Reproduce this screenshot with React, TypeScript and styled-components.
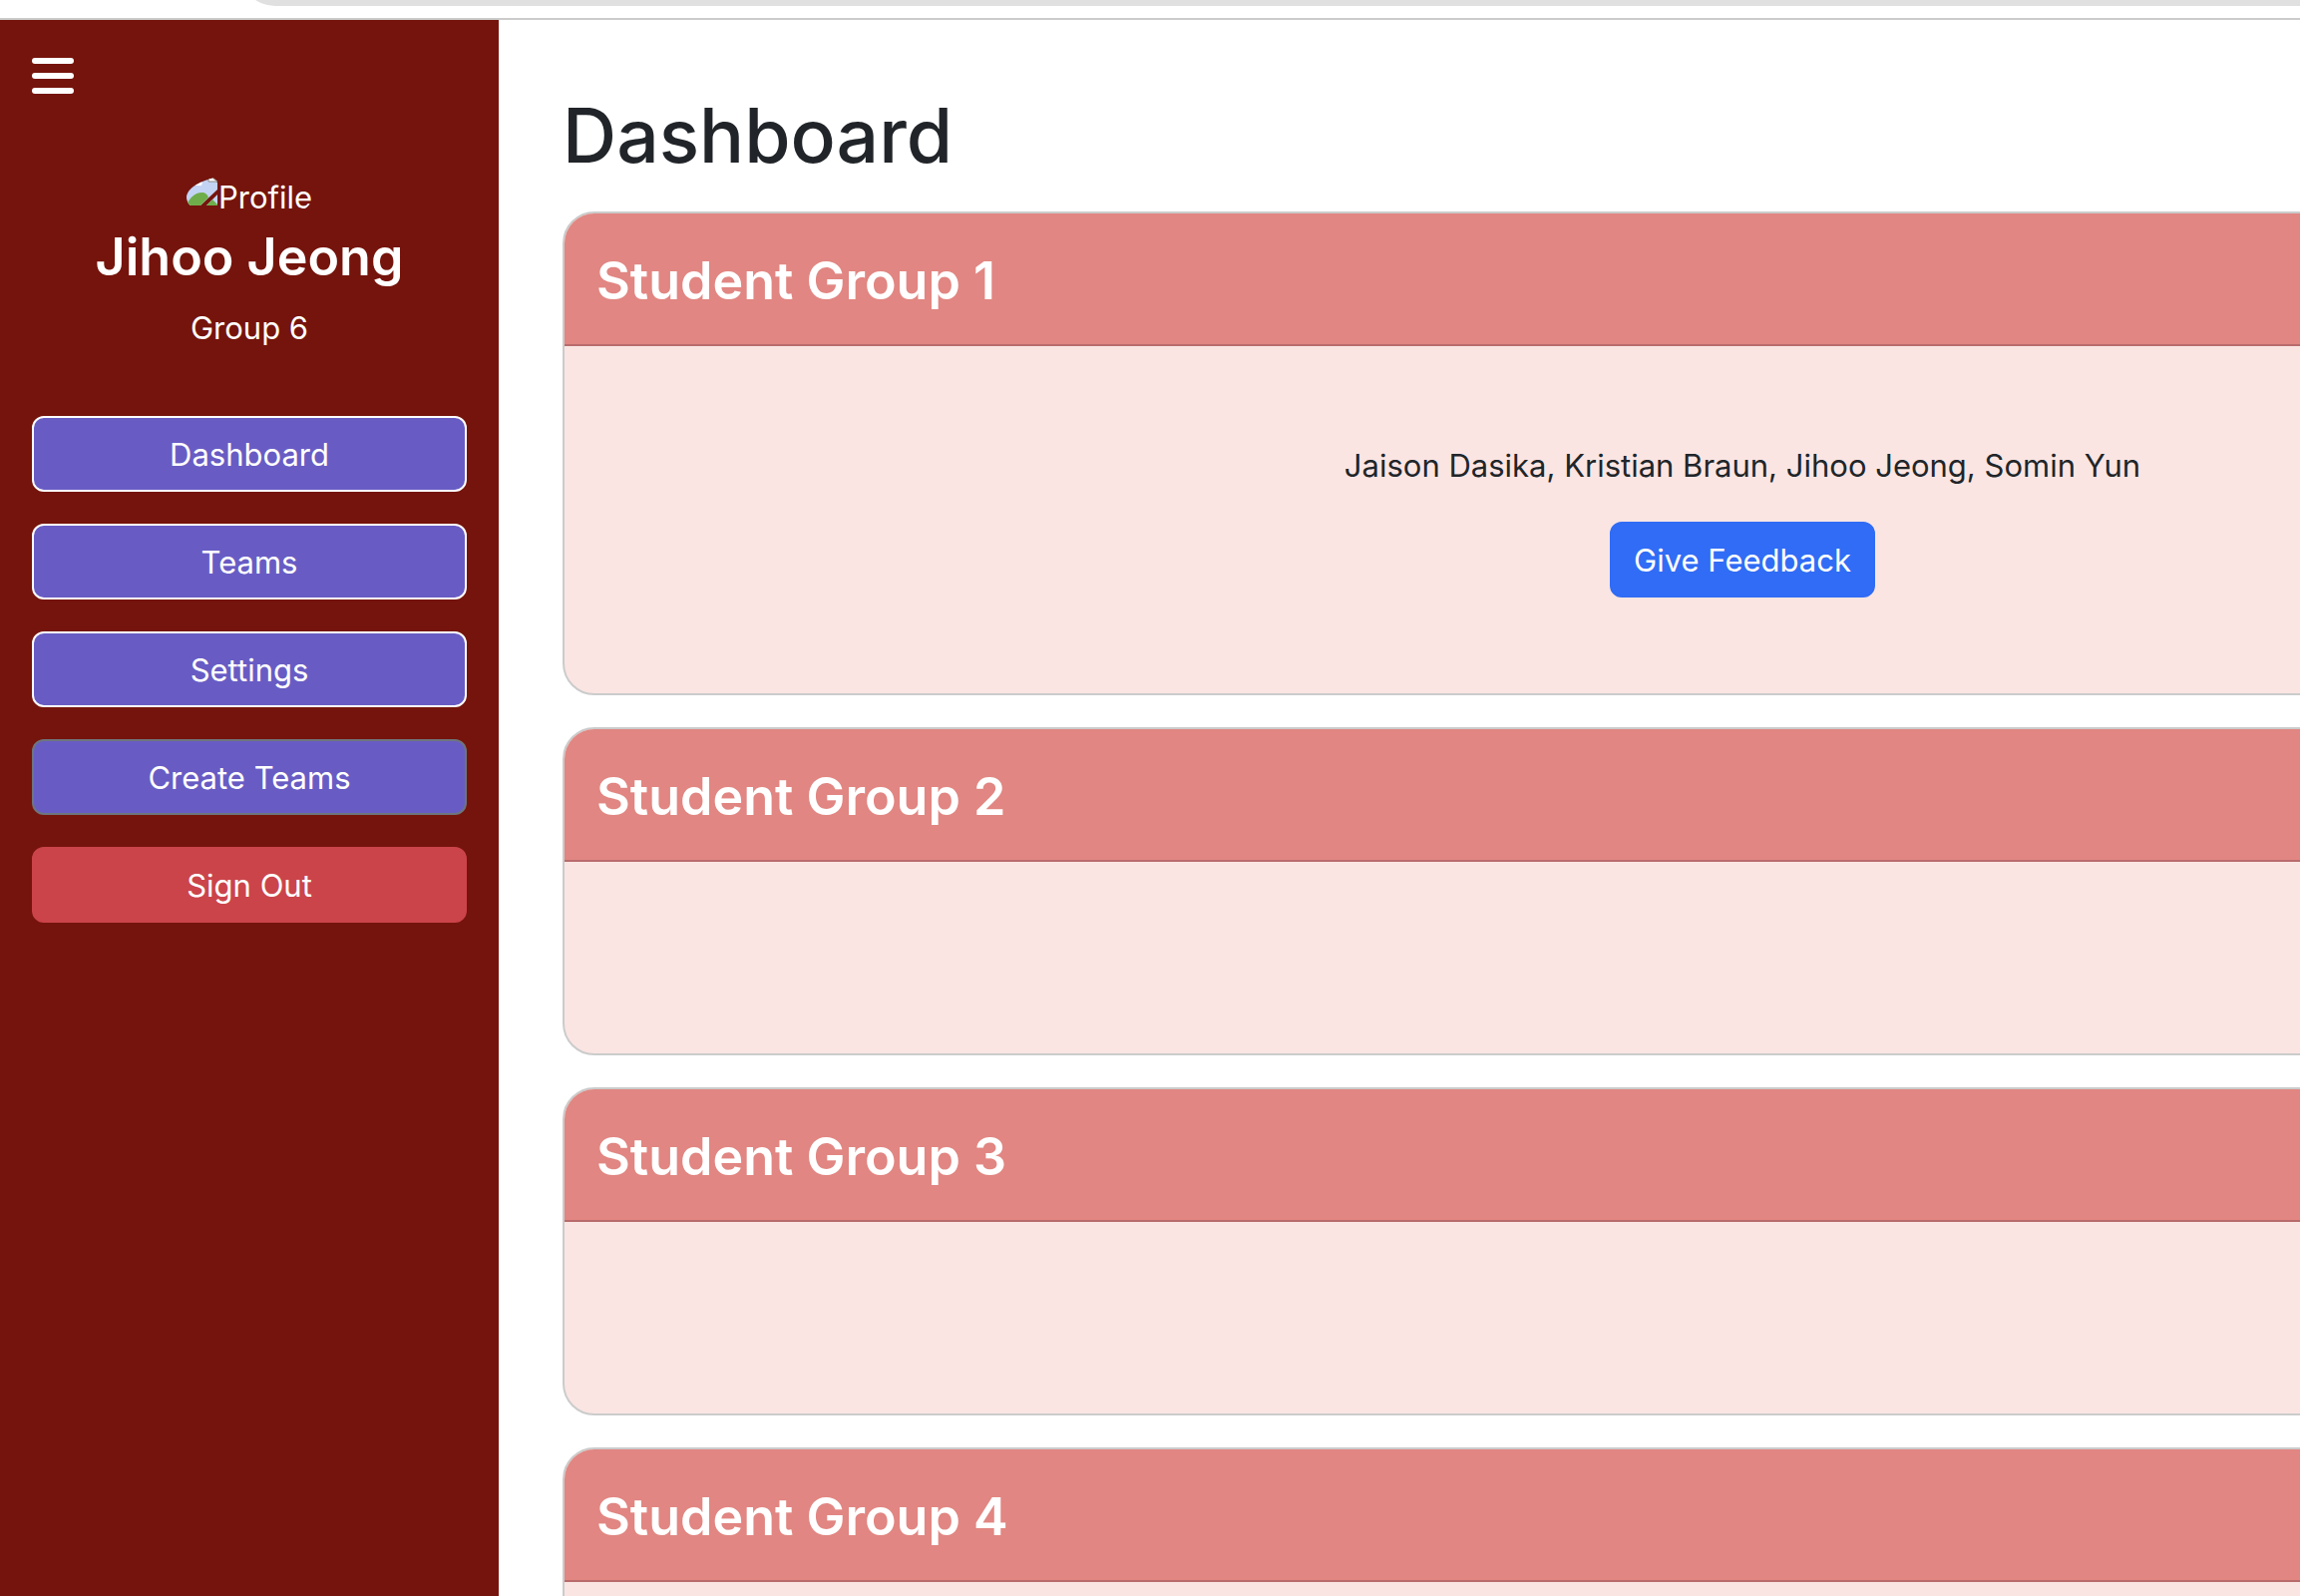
import React from 'react';
import styled, { createGlobalStyle } from 'styled-components';

const GlobalStyle = createGlobalStyle`
  *, *::before, *::after { box-sizing: border-box; }
  body {
    margin: 0;
    background: #ffffff;
    color: #212529;
    font-family: Inter, "Liberation Sans", sans-serif;
    font-size: 31px;
    line-height: 48px;
  }
  h1, h2, p { margin: 0; }
`;

const Page = styled.div`
  display: flex;
  flex-direction: column;
  height: 100vh;
  overflow: hidden;
`;

const BrowserBar = styled.div`
  flex: none;
  display: flex;
  align-items: flex-end;
  height: 20px;
  padding: 0 0 12px 240px;
  border-bottom: 2px solid #cbcbcb;
  overflow: hidden;
`;

const AddressField = styled.div`
  flex: 1;
  height: 72px;
  border-bottom-left-radius: 36px;
  background: #e0e0e0;
`;

const Shell = styled.div`
  flex: 1;
  display: flex;
  min-height: 0;
`;

const Sidebar = styled.aside`
  flex: none;
  display: flex;
  flex-direction: column;
  width: 500px;
  padding: 32px;
  background: #75140c;
  color: #ffffff;
`;

const MenuButton = styled.button`
  align-self: flex-start;
  display: flex;
  padding: 0;
  border: 0;
  background: none;
  color: inherit;
  cursor: pointer;
`;

const Profile = styled.section`
  display: flex;
  flex-direction: column;
  align-items: center;
  margin: 74px 0 64px;
`;

const Avatar = styled.div`
  display: flex;
  align-items: flex-start;
  height: 48px;
  border-radius: 50%;
  overflow: hidden;

  svg { margin-top: 4px; }
`;

const UserName = styled.h2`
  margin: 2px 0 14px;
  font-size: 52px;
  font-weight: 600;
  line-height: 67px;
`;

const Nav = styled.nav`
  display: flex;
  flex-direction: column;
  gap: 32px;
`;

const Button = styled.button<{ $fill: string; $edge?: string }>`
  height: 76px;
  padding: 2px 22px 0;
  border: 2px solid ${(p) => p.$edge ?? p.$fill};
  border-radius: 12px;
  background: ${(p) => p.$fill};
  color: #ffffff;
  font: inherit;
  cursor: pointer;
`;

/* The board runs past the right side of the window. */
const Main = styled.main`
  flex: 1;
  min-width: 0;
  margin-right: -688px;
  padding: 68px 64px 64px;
`;

const Title = styled.h1`
  margin-bottom: 28px;
  font-size: 75px;
  font-weight: 500;
  line-height: 96px;
`;

const Groups = styled.div`
  display: flex;
  flex-direction: column;
  gap: 32px;
`;

const Card = styled.section`
  border: 2px solid #cbcbcb;
  border-radius: 32px;
  background: #fae5e3;
  overflow: hidden;
`;

const CardTitle = styled.h2`
  padding: 34px 32px 30px;
  border-bottom: 2px solid #b96b6c;
  background: #e18682;
  color: #ffffff;
  font-size: 52px;
  font-weight: 600;
  line-height: 67px;
`;

const CardBody = styled.div`
  display: flex;
  flex-direction: column;
  align-items: center;
  gap: 32px;
  padding: 96px 32px;
`;

const MenuIcon = () => (
  <svg width="42" height="48" viewBox="0 0 42 48" fill="currentColor" aria-hidden="true">
    <rect y="6" width="42" height="6" rx="3" />
    <rect y="21" width="42" height="6" rx="3" />
    <rect y="36" width="42" height="6" rx="3" />
  </svg>
);

const MissingImageIcon = () => (
  <svg width="32" height="32" viewBox="0 0 32 32" aria-hidden="true">
    <path d="M0 0H24L31 5V12L14 28H0Z" fill="#c3d3f3" />
    <path d="M22 0V4H31L26 0Z" fill="#ffffff" stroke="#8a8a8a" />
    <path d="M7 8C9 4 13 3 16 5L15 8Z" fill="#ffffff" />
    <path d="M0 28C3 19 10 15 15 15C19 15 21 17 22 20L14 28Z" fill="#6fad4b" />
    <path d="M31 17V28H20Z" fill="#c3d3f3" />
    <path d="M26 22L31 27V28H20Z" fill="#6fad4b" />
  </svg>
);

const links = [
  { label: 'Dashboard', fill: '#685cc4', edge: '#ffffff' },
  { label: 'Teams', fill: '#685cc4', edge: '#ffffff' },
  { label: 'Settings', fill: '#685cc4', edge: '#ffffff' },
  { label: 'Create Teams', fill: '#685cc4', edge: '#6e757c' },
  { label: 'Sign Out', fill: '#cb444a' },
];

const groups = [
  { name: 'Student Group 1', members: 'Jaison Dasika, Kristian Braun, Jihoo Jeong, Somin Yun' },
  { name: 'Student Group 2' },
  { name: 'Student Group 3' },
  { name: 'Student Group 4' },
];

export default function App() {
  return (
    <Page>
      <GlobalStyle />
      <BrowserBar>
        <AddressField />
      </BrowserBar>
      <Shell>
        <Sidebar>
          <MenuButton type="button" aria-label="Menu">
            <MenuIcon />
          </MenuButton>
          <Profile>
            <Avatar>
              <MissingImageIcon />
              <span>Profile</span>
            </Avatar>
            <UserName>Jihoo Jeong</UserName>
            <p>Group 6</p>
          </Profile>
          <Nav>
            {links.map((link) => (
              <Button key={link.label} type="button" $fill={link.fill} $edge={link.edge}>
                {link.label}
              </Button>
            ))}
          </Nav>
        </Sidebar>
        <Main>
          <Title>Dashboard</Title>
          <Groups>
            {groups.map((group) => (
              <Card key={group.name}>
                <CardTitle>{group.name}</CardTitle>
                <CardBody>
                  {group.members && (
                    <>
                      <p>{group.members}</p>
                      <Button type="button" $fill="#306cf5">
                        Give Feedback
                      </Button>
                    </>
                  )}
                </CardBody>
              </Card>
            ))}
          </Groups>
        </Main>
      </Shell>
    </Page>
  );
}
